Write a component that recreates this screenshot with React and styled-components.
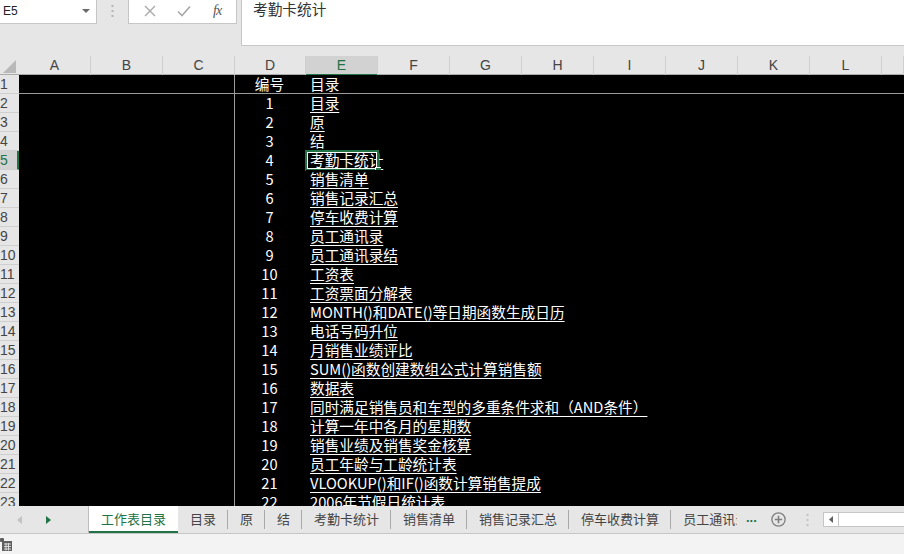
import React from 'react'
import styled, { createGlobalStyle } from 'styled-components'

const GREEN = '#217346'
const CJK = '"Noto Sans CJK SC", "Noto Sans", sans-serif'
const LATIN = '"Liberation Sans", Arial, sans-serif'

const GlobalStyle = createGlobalStyle`
  html, body {
    margin: 0;
    padding: 0;
    overflow: hidden;
    background: #e6e6e6;
  }
  body {
    font-family: ${CJK};
  }
`

const Window = styled.div`
  width: 904px;
  height: 554px;
  display: flex;
  flex-direction: column;
  overflow: hidden;
  background: #e6e6e6;
`

/* formula bar */

const FormulaBar = styled.div`
  display: flex;
  align-items: flex-start;
  height: 56px;
  flex-shrink: 0;
`

const NameBox = styled.div`
  box-sizing: border-box;
  width: 97px;
  height: 24px;
  background: #fff;
  border: 1px solid #c6c6c6;
  border-top: none;
  border-left: none;
  display: flex;
  align-items: center;
  justify-content: space-between;
  padding: 0 6px 2px 3px;
  font-family: ${LATIN};
  font-size: 12px;
  color: #222;
`

const DropArrow = styled.span`
  width: 0;
  height: 0;
  border-left: 4px solid transparent;
  border-right: 4px solid transparent;
  border-top: 4px solid #6a6a6a;
`

const DotsHandle = styled.div`
  width: 31px;
  height: 22px;
  display: flex;
  align-items: center;
  justify-content: center;
`

const FuncButtons = styled.div`
  box-sizing: border-box;
  width: 109px;
  height: 24px;
  background: #fff;
  border: 1px solid #c6c6c6;
  border-top: none;
  display: flex;
  align-items: center;
  justify-content: space-around;
  padding: 0 4px 2px;
`

const FxLabel = styled.span`
  font-family: "Liberation Serif", "Times New Roman", serif;
  font-style: italic;
  font-size: 14px;
  color: #555;
  letter-spacing: -1px;
`

const FormulaInput = styled.div`
  box-sizing: border-box;
  flex: 1;
  height: 46px;
  margin-left: 4px;
  background: #fff;
  border: 1px solid #c6c6c6;
  border-top: none;
  border-right: none;
  padding: 0 0 0 11px;
  font-size: 14.67px;
  line-height: 18px;
  color: #333;
`

/* sheet */

const Sheet = styled.div`
  height: 450px;
  flex-shrink: 0;
  overflow: hidden;
  background: #000;
`

const HeaderRow = styled.div`
  display: grid;
  grid-template-columns: 19px repeat(3, 72px) 71px repeat(8, 72px) 1fr;
  height: 19px;
  background: #e6e6e6;
  border-bottom: 1px solid #ababab;
  box-sizing: border-box;
`

const Corner = styled.div`
  display: flex;
  align-items: flex-end;
  justify-content: flex-end;
  padding: 0 3px 2px 0;
`

const ColHead = styled.div`
  box-sizing: border-box;
  border-right: 1px solid #cfcfcf;
  font-family: ${LATIN};
  font-size: 14px;
  line-height: 18px;
  text-align: center;
  color: ${(p) => (p.$active ? GREEN : '#444')};
  background: ${(p) => (p.$active ? '#d2d2d2' : 'transparent')};
  border-bottom: ${(p) => (p.$active ? `2px solid ${GREEN}` : 'none')};
  margin-bottom: ${(p) => (p.$active ? '-1px' : '0')};
  position: relative;
`

const Row = styled.div`
  display: grid;
  grid-template-columns: 19px 216px 71px 1fr;
  height: 19px;
`

const RowHead = styled.div`
  box-sizing: border-box;
  background: ${(p) => (p.$active ? '#d2d2d2' : '#e6e6e6')};
  color: ${(p) => (p.$active ? GREEN : '#444')};
  border-bottom: 1px solid #cfcfcf;
  border-right: ${(p) => (p.$active ? `2px solid ${GREEN}` : 'none')};
  font-family: ${LATIN};
  font-size: 14px;
  line-height: 19px;
  padding-left: 0;
  overflow: hidden;
  white-space: nowrap;
`

const Cell = styled.div`
  box-sizing: border-box;
  background: #000;
  color: #fff;
  font-size: 14.67px;
  line-height: 18px;
  white-space: nowrap;
  border-bottom: ${(p) => (p.$head ? '1px solid #9b9b9b' : 'none')};
`

const BlankCell = styled(Cell)`
  border-right: 1px solid #9b9b9b;
`

const NumCell = styled(Cell)`
  text-align: center;
  padding-right: 2px;
`

const TitleCell = styled(Cell)`
  position: relative;
  padding-left: 4px;
  overflow: visible;
`

const LinkText = styled.span`
  text-decoration: ${(p) => (p.$link ? 'underline' : 'none')};
  text-decoration-thickness: 1px;
  text-underline-offset: 3px;
`

const Selection = styled.div`
  position: absolute;
  left: -1px;
  top: -1px;
  width: 74px;
  height: 21px;
  box-sizing: border-box;
  border: 2px solid ${GREEN};
  box-shadow: inset 0 0 0 1px #fff;
  pointer-events: none;

  &::after {
    content: '';
    position: absolute;
    right: -4px;
    bottom: -4px;
    width: 5px;
    height: 5px;
    background: ${GREEN};
    border-left: 1px solid #fff;
    border-top: 1px solid #fff;
  }
`

/* tab bar */

const TabBar = styled.div`
  display: flex;
  align-items: stretch;
  height: 28px;
  flex-shrink: 0;
  background: #e6e6e6;
  border-bottom: 1px solid #c6c6c6;
  box-sizing: border-box;
`

const TabNav = styled.div`
  width: 89px;
  border-right: 1px solid #bcbcbc;
  display: flex;
  align-items: center;
  padding-left: 17px;
  gap: 24px;
  box-sizing: border-box;
`

const NavArrow = styled.span`
  width: 0;
  height: 0;
  border-top: 4px solid transparent;
  border-bottom: 4px solid transparent;
  ${(p) =>
    p.$dir === 'left'
      ? `border-right: 5px solid ${p.$on ? GREEN : '#c3c3c3'};`
      : `border-left: 5px solid ${p.$on ? GREEN : '#c3c3c3'};`}
`

const Tabs = styled.div`
  display: flex;
  width: 648px;
  overflow: hidden;
`

const Tab = styled.div`
  position: relative;
  flex-shrink: 0;
  padding: 0 12px;
  font-size: 13px;
  line-height: 26px;
  white-space: nowrap;
  color: ${(p) => (p.$active ? GREEN : '#444')};
  background: ${(p) => (p.$active ? '#fff' : 'transparent')};
  border-bottom: ${(p) => (p.$active ? `3px solid ${GREEN}` : '3px solid transparent')};
  margin-bottom: -1px;

  ${(p) =>
    !p.$active &&
    `&::after {
      content: '';
      position: absolute;
      right: 0;
      top: 4px;
      height: 19px;
      width: 1px;
      background: #a9a9a9;
    }`}
`

const TabTools = styled.div`
  flex: 1;
  display: flex;
  align-items: center;
  padding-left: 9px;
`

const More = styled.span`
  color: ${GREEN};
  font-family: ${LATIN};
  font-weight: bold;
  font-size: 13px;
  letter-spacing: 0;
  margin-top: -4px;
  width: 25px;
`

const AddSheet = styled.span`
  display: flex;
  width: 15px;
  height: 15px;
`

const Scroll = styled.div`
  margin-left: auto;
  width: 81px;
  height: 15px;
  box-sizing: border-box;
  background: #fff;
  border: 1px solid #c6c6c6;
  border-right: none;
  display: flex;
`

const ScrollBtn = styled.div`
  width: 14px;
  border-right: 1px solid #c6c6c6;
  display: flex;
  align-items: center;
  justify-content: center;
`

const StatusBar = styled.div`
  flex: 1;
  background: #f3f3f3;
  display: flex;
  align-items: center;
`

const rows = [
  [1, '目录'],
  [2, '原'],
  [3, '结'],
  [4, '考勤卡统计'],
  [5, '销售清单'],
  [6, '销售记录汇总'],
  [7, '停车收费计算'],
  [8, '员工通讯录'],
  [9, '员工通讯录结'],
  [10, '工资表'],
  [11, '工资票面分解表'],
  [12, 'MONTH()和DATE()等日期函数生成日历'],
  [13, '电话号码升位'],
  [14, '月销售业绩评比'],
  [15, 'SUM()函数创建数组公式计算销售额'],
  [16, '数据表'],
  [17, '同时满足销售员和车型的多重条件求和（AND条件）'],
  [18, '计算一年中各月的星期数'],
  [19, '销售业绩及销售奖金核算'],
  [20, '员工年龄与工龄统计表'],
  [21, 'VLOOKUP()和IF()函数计算销售提成'],
  [22, '2006年节假日统计表'],
]

const tabs = ['工作表目录', '目录', '原', '结', '考勤卡统计', '销售清单', '销售记录汇总', '停车收费计算', '员工通讯录']
const cols = ['A', 'B', 'C', 'D', 'E', 'F', 'G', 'H', 'I', 'J', 'K', 'L', '']

export default function App() {
  return (
    <Window>
      <GlobalStyle />
      <FormulaBar>
        <NameBox>
          E5
          <DropArrow />
        </NameBox>
        <DotsHandle>
          <svg width="3" height="12" viewBox="0 0 3 12">
            <rect x="0.5" y="0" width="2" height="2" fill="#b4b4b4" />
            <rect x="0.5" y="5" width="2" height="2" fill="#b4b4b4" />
            <rect x="0.5" y="10" width="2" height="2" fill="#b4b4b4" />
          </svg>
        </DotsHandle>
        <FuncButtons>
          <svg width="12" height="12" viewBox="0 0 12 12">
            <path d="M1 1 L11 11 M11 1 L1 11" stroke="#a8a8a8" strokeWidth="1.4" />
          </svg>
          <svg width="14" height="12" viewBox="0 0 14 12">
            <path d="M1 6.5 L5 10.5 L13 1.5" stroke="#a8a8a8" strokeWidth="1.6" fill="none" />
          </svg>
          <FxLabel>fx</FxLabel>
        </FuncButtons>
        <FormulaInput>考勤卡统计</FormulaInput>
      </FormulaBar>

      <Sheet>
        <HeaderRow>
          <Corner>
            <svg width="13" height="13" viewBox="0 0 13 13">
              <polygon points="13,0 13,13 0,13" fill="#b9b9b9" />
            </svg>
          </Corner>
          {cols.map((c, i) => (
            <ColHead key={i} $active={c === 'E'}>{c}</ColHead>
          ))}
        </HeaderRow>

        <Row>
          <RowHead>1</RowHead>
          <BlankCell $head />
          <NumCell $head>编号</NumCell>
          <TitleCell $head>目录</TitleCell>
        </Row>
        {rows.map(([n, title]) => (
          <Row key={n}>
            <RowHead $active={n === 4}>{n + 1}</RowHead>
            <BlankCell />
            <NumCell>{n}</NumCell>
            <TitleCell>
              <LinkText $link>{title}</LinkText>
              {n === 4 && <Selection />}
            </TitleCell>
          </Row>
        ))}
        <Row>
          <RowHead>23</RowHead>
          <BlankCell />
          <NumCell />
          <TitleCell />
        </Row>
      </Sheet>

      <TabBar>
        <TabNav>
          <NavArrow $dir="left" />
          <NavArrow $dir="right" $on />
        </TabNav>
        <Tabs>
          {tabs.map((t, i) => (
            <Tab key={t} $active={i === 0}>{t}</Tab>
          ))}
        </Tabs>
        <TabTools>
          <More>...</More>
          <AddSheet>
            <svg width="15" height="15" viewBox="0 0 15 15">
              <circle cx="7.5" cy="7.5" r="6.6" stroke="#7f7f7f" strokeWidth="1.3" fill="none" />
              <path d="M7.5 3.8 V11.2 M3.8 7.5 H11.2" stroke="#7f7f7f" strokeWidth="1.6" />
            </svg>
          </AddSheet>
          <svg width="3" height="12" viewBox="0 0 3 12" style={{ marginLeft: 20 }}>
            <rect x="0.5" y="0" width="2" height="2" fill="#c4c4c4" />
            <rect x="0.5" y="5" width="2" height="2" fill="#c4c4c4" />
            <rect x="0.5" y="10" width="2" height="2" fill="#c4c4c4" />
          </svg>
          <Scroll>
            <ScrollBtn>
              <svg width="4" height="7" viewBox="0 0 4 7">
                <polygon points="4,0 4,7 0,3.5" fill="#606060" />
              </svg>
            </ScrollBtn>
          </Scroll>
        </TabTools>
      </TabBar>

      <StatusBar>
        <svg width="12" height="13" viewBox="0 0 12 13">
          <rect x="0" y="0" width="4" height="4" rx="1" fill="#606060" />
          <rect x="2" y="3" width="10" height="10" fill="#606060" />
          <path d="M4 6 H11 M4 8.5 H11 M4 11 H11 M6 5 V12.5 M8.5 5 V12.5" stroke="#f3f3f3" strokeWidth="0.8" />
        </svg>
      </StatusBar>
    </Window>
  )
}
